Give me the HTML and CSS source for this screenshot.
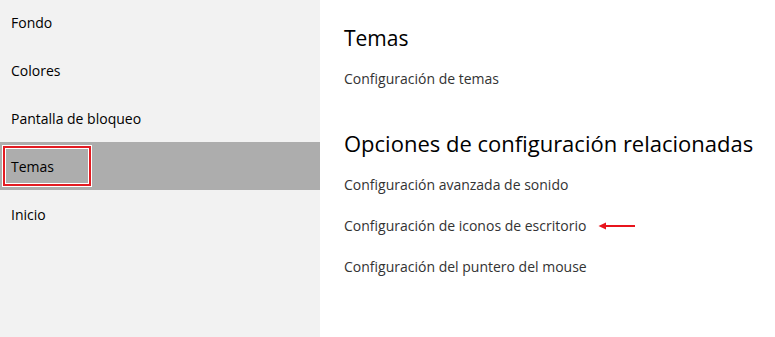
FILE: index.html
```html
<!DOCTYPE html>
<html lang="es">
<head>
<meta charset="utf-8">
<title>Personalización</title>
<link rel="stylesheet" href="styles.css">
</head>
<body>
<div class="app">
  <nav class="sidebar">
    <div class="item first">Fondo</div>
    <div class="item">Colores</div>
    <div class="item">Pantalla de bloqueo</div>
    <div class="item selected"><span class="mark">Temas</span></div>
    <div class="item">Inicio</div>
  </nav>
  <main class="content">
    <h1 class="title">Temas</h1>
    <div class="link">Configuración de temas</div>
    <h2 class="title related">Opciones de configuración relacionadas</h2>
    <div class="link">Configuración avanzada de sonido</div>
    <div class="link">Configuración de iconos de escritorio<svg class="arrow" width="38" height="10" viewBox="0 0 38 10"><path d="M4 5H37" stroke="#e8141c" stroke-width="2"/><path d="M0.5 5L8 1.5V8.5Z" fill="#e8141c"/></svg></div>
    <div class="link">Configuración del puntero del mouse</div>
  </main>
</div>
</body>
</html>
```
FILE: styles.css
```css
html, body {
  margin: 0;
  padding: 0;
  background: #ffffff;
}
.app {
  display: flex;
  width: 775px;
  height: 337px;
  overflow: hidden;
  font-family: "Open Sans", "Noto Sans", sans-serif;
}
.sidebar {
  width: 320px;
  flex: none;
  background: #f2f2f2;
  display: flex;
  flex-direction: column;
}
.item {
  height: 48px;
  display: flex;
  align-items: center;
  padding-left: 11px;
  font-size: 14px;
  color: #000;
}
.item.first {
  margin-top: -2px;
}
.item.selected {
  background: #adadad;
  padding-left: 3px;
}
.mark {
  box-sizing: border-box;
  width: 88px;
  height: 40px;
  display: flex;
  align-items: center;
  padding-left: 6px;
  border: 2px solid #e21b22;
  box-shadow: 0 0 0 1px #ffffff, inset 0 0 0 1px #ffffff;
}
.content {
  flex: 1;
  padding-left: 24px;
  padding-top: 22px;
  background: #ffffff;
}
.title {
  margin: 0;
  font-weight: 400;
  font-size: 21px;
  color: #000;
  line-height: 32px;
}
.related {
  margin-top: 38px;
  font-size: 22px;
}
.link {
  font-size: 14px;
  color: #333;
  line-height: 20px;
  margin-top: 21px;
  display: flex;
  align-items: center;
}
.title + .link {
  margin-top: 15px;
}
.related + .link {
  margin-top: 16px;
}
.arrow {
  margin-left: 12px;
}
```
